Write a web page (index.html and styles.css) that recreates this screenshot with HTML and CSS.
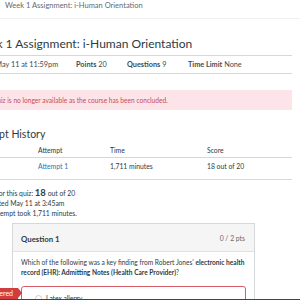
FILE: index.html
```html
<!DOCTYPE html>
<html>
<head>
<meta charset="utf-8">
<link rel="stylesheet" href="styles.css">
</head>
<body>
<div class="crumbs">Week 1 Assignment: i-Human Orientation</div>
<div class="main">
  <h1 class="title">Week 1 Assignment: i-Human Orientation</h1>
  <div class="meta">
    <span class="due">Due May 11 at 11:59pm</span>
    <span class="pts"><b>Points</b> 20</span>
    <span class="qs"><b>Questions</b> 9</span>
    <span class="tl"><b>Time Limit</b> None</span>
  </div>
  <div class="alert">This quiz is no longer available as the course has been concluded.</div>
  <h2 class="hist">Attempt History</h2>
  <div class="table">
    <div class="row head">
      <span class="c0"></span><span class="c1">Attempt</span><span class="c2">Time</span><span class="c3">Score</span>
    </div>
    <div class="row body">
      <span class="c0"></span><a class="c1 link">Attempt 1</a><span class="c2">1,711 minutes</span><span class="c3">18 out of 20</span>
    </div>
  </div>
  <div class="summary">
    <div>Score for this quiz: <b class="big">18</b> out of 20</div>
    <div>Submitted May 11 at 3:45am</div>
    <div>This attempt took 1,711 minutes.</div>
  </div>
  <div class="question">
    <div class="qhead">
      <span class="qname">Question 1</span>
      <span class="qpts">0 / 2 pts</span>
    </div>
    <div class="qbody">
      <p class="qtext">Which of the following was a key finding from Robert Jones' <b>electronic health record (EHR): Admitting Notes (Health Care Provider)</b>?</p>
      <div class="answer">
        <span class="tag">You Answered</span>
        <span class="radio"></span><span class="atext">Latex allergy</span>
      </div>
    </div>
  </div>
</div>
<div class="bottombar"></div>
</body>
</html>
```
FILE: styles.css
```css
html, body {
  margin: 0;
  padding: 0;
  width: 300px;
  height: 300px;
  overflow: hidden;
  background: #fff;
  font-family: Lato, "Open Sans", sans-serif;
  color: #2d3b45;
}
.crumbs {
  height: 18px;
  line-height: 11px;
  font-size: 7.5px;
  color: #5e6a73;
  padding-left: 5px;
  border-bottom: 1px solid #f0f0f0;
}
.main {
  margin-left: -22px;
  width: 314px;
}
.title {
  margin: 15px 0 0 -6px;
  padding-left: 6px;
  text-indent: -6px;
  font-size: 12px;
  font-weight: 400;
  line-height: 20px;
  height: 21px;
  border-bottom: 1px solid #d4d8db;
  white-space: nowrap;
}
.meta {
  display: flex;
  height: 17px;
  line-height: 17px;
  font-size: 7.3px;
  border-bottom: 1px solid #d4d8db;
  color: #3d4b55;
  white-space: nowrap;
}
.meta b { font-weight: 700; }
.due { width: 96px; margin-left: 2px; }
.pts { width: 51px; }
.qs { width: 61px; }
.alert {
  margin-top: 16px;
  height: 20px;
  line-height: 20px;
  background: #fce4e8;
  color: #c94a5c;
  font-size: 6.6px;
  padding-left: 2px;
  white-space: nowrap;
}
.hist {
  margin: 17px 0 0 -7px;
  font-size: 10.5px;
  font-weight: 400;
  line-height: 14px;
}
.table {
  margin-top: 4px;
  font-size: 6.8px;
}
.row {
  display: flex;
  border-bottom: 1px solid #d4d8db;
}
.row.head {
  height: 12px;
  line-height: 11px;
}
.row.body {
  height: 21px;
  line-height: 17px;
}
.c0 { width: 60px; }
.c1 { width: 72px; }
.c2 { width: 97px; }
.link { color: #2a77b0; }
.summary {
  margin-top: 8px;
  font-size: 6.8px;
  line-height: 10px;
}
.summary .big { font-size: 9.5px; }
.question {
  margin: 5px 0 0 34px;
  width: 241px;
  height: 100px;
  border: 1px solid #d4d8db;
}
.qhead {
  display: flex;
  justify-content: space-between;
  align-items: center;
  height: 27px;
  background: #f5f5f5;
  border-bottom: 1px solid #dfe2e4;
  padding: 0 9px 0 8px;
}
.qname { font-size: 7.8px; font-weight: 700; margin-top: 3px; }
.qpts { font-size: 6.8px; color: #5e6a73; }
.qbody {
  padding: 5px 8px 0 8px;
}
.qtext {
  margin: 0;
  font-size: 6.6px;
  line-height: 10px;
}
.answer {
  position: relative;
  margin-top: 9px;
  height: 30px;
  border: 1px solid #d65c66;
  border-radius: 3px;
  display: flex;
  align-items: flex-start;
  padding: 7px 0 0 13px;
  box-sizing: border-box;
  font-size: 6.6px;
}
.radio {
  width: 5px;
  height: 5px;
  border: 1px solid #c8cdd0;
  border-radius: 50%;
  margin: 1px 4px 0 0;
}
.tag {
  position: absolute;
  right: calc(100% + 4px);
  top: 1px;
  height: 11px;
  line-height: 11px;
  background: #d23c3c;
  color: #fff;
  font-size: 7px;
  padding: 0 5px 0 6px;
  white-space: nowrap;
  border-radius: 2px 0 0 2px;
}
.tag::after {
  content: "";
  position: absolute;
  left: 100%;
  top: 0;
  border-top: 5.5px solid transparent;
  border-bottom: 5.5px solid transparent;
  border-left: 4px solid #d23c3c;
}
.bottombar {
  position: fixed;
  left: 0;
  bottom: 0;
  width: 300px;
  height: 1px;
  background: #444;
}
```
